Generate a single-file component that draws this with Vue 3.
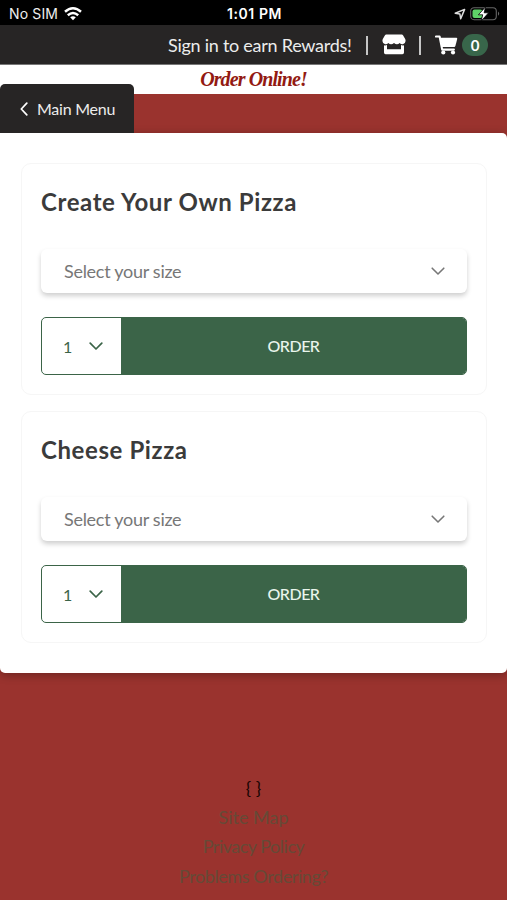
<script setup>
const items = ['Create Your Own Pizza', 'Cheese Pizza']
const links = ['Site Map', 'Privacy Policy', 'Problems Ordering?']
</script>

<template>
  <div class="page">
    <div class="status">
      <div class="carrier">
        <span>No SIM</span>
        <svg width="18" height="14" viewBox="0 0 18 14">
          <g fill="none" stroke="#fff" stroke-width="2.5">
            <path d="M1 4.8Q9-2.2 17 4.8" />
            <path d="M3.8 8.2Q9 3.7 14.2 8.2" />
          </g>
          <path d="M6.2 10.3Q9 8 11.8 10.3L9 13.3Z" fill="#fff" />
        </svg>
      </div>
      <span class="clock">1:01 PM</span>
      <div class="power">
        <svg width="12" height="12" viewBox="0 0 12 12">
          <path d="M10.6 1.4L1.2 5.3L5.9 6.1L6.7 10.8Z" fill="none" stroke="#ddd" stroke-width="1.5" stroke-linejoin="round" />
        </svg>
        <svg width="30" height="16" viewBox="0 0 30 16">
          <rect x=".7" y="1.7" width="25.6" height="12" rx="3.4" fill="none" stroke="#666" stroke-width="1.1" />
          <path d="M28 5.6Q30.4 7.7 28 9.8Z" fill="#666" />
          <rect x="2.5" y="3.5" width="10" height="8.6" rx="2" fill="#5fd468" />
          <path d="M15.6.8L8.4 8.8H12.7L11.2 15L18.6 6.8H14.1Z" fill="#fff" stroke="#000" stroke-width=".8" />
        </svg>
      </div>
    </div>

    <header class="topbar">
      <a class="signin">Sign in to earn Rewards!</a>
      <i class="bar"></i>
      <svg class="store" width="24" height="21" viewBox="0 0 24 21">
        <path d="M4.2.5H19.8Q20.6.5 21 1.2L23.2 5Q24.6 9.4 20.8 10.2Q19 10.5 17.7 9Q15 11.4 12 9Q9 11.4 6.3 9Q5 10.5 3.2 10.2Q-.6 9.4.8 5L3 1.2Q3.4.5 4.2.5Z" fill="#fff" />
        <path d="M2 11.2Q3.6 11.7 5 11V15.2H19V11Q20.4 11.7 22 11.2V18.6Q22 20.2 20.4 20.2H3.6Q2 20.2 2 18.6Z" fill="#fff" />
      </svg>
      <i class="bar second"></i>
      <svg class="cart" width="23" height="20" viewBox="0 0 23 20">
        <path d="M1 1.5H4.6L7.2 14.6H18.9" fill="none" stroke="#fff" stroke-width="2.1" stroke-linejoin="round" stroke-linecap="round" />
        <path d="M5.2 2.7H21.3Q22.5 2.7 22.2 3.9L20.4 11Q20.1 11.9 19.2 11.9H7Z" fill="#fff" />
        <circle cx="8.3" cy="17.5" r="2.1" fill="#fff" />
        <circle cx="18" cy="17.5" r="2.1" fill="#fff" />
      </svg>
      <span class="count">0</span>
    </header>

    <div class="banner">Order Online!</div>

    <a class="tab">
      <svg width="8" height="14" viewBox="0 0 8 14">
        <path d="M6.8 1.2L1.3 7L6.8 12.8" fill="none" stroke="#fff" stroke-width="1.7" stroke-linecap="round" stroke-linejoin="round" />
      </svg>
      <span>Main Menu</span>
    </a>

    <main class="panel">
      <section v-for="item in items" :key="item" class="card">
        <h2>{{ item }}</h2>
        <div class="size">
          <span>Select your size</span>
          <svg width="14" height="9" viewBox="0 0 14 9">
            <path d="M1.2 1.2L7 7L12.8 1.2" fill="none" stroke="#777" stroke-width="1.6" stroke-linecap="round" stroke-linejoin="round" />
          </svg>
        </div>
        <div class="buy">
          <div class="qty">
            <span>1</span>
            <svg width="14" height="9" viewBox="0 0 14 9">
              <path d="M1.2 1.2L7 7L12.8 1.2" fill="none" stroke="#3b6448" stroke-width="1.7" stroke-linecap="round" stroke-linejoin="round" />
            </svg>
          </div>
          <div class="order"><span>ORDER</span></div>
        </div>
      </section>
    </main>

    <footer class="footer">
      <div class="braces">{ }</div>
      <a v-for="(link, i) in links" :key="link" :class="'link' + i">{{ link }}</a>
    </footer>
  </div>
</template>

<style>
body { background: #9a332e; overflow: hidden; }
</style>

<style scoped>
.page {
  box-sizing: border-box;
  width: 507px;
  height: 900px;
  overflow: hidden;
  background: #9a332e;
  font-family: Lato, sans-serif;
}
svg { display: block; flex: none; }
.status {
  display: grid;
  grid-template-columns: 1fr auto 1fr;
  align-items: center;
  height: 25px;
  padding: 2px 7px 0 9px;
  box-sizing: border-box;
  background: #000;
  color: #eee;
  font: 400 14px/23px Inter, sans-serif;
}
.carrier { display: flex; align-items: center; gap: 6px; letter-spacing: .15px; }
.clock { font-weight: 600; color: #fff; letter-spacing: .6px; }
.power { display: flex; align-items: center; justify-content: flex-end; gap: 4px; }
.topbar {
  display: flex;
  align-items: center;
  height: 40px;
  box-sizing: border-box;
  padding: 0 19px 0 168px;
  background: #272525;
  border-bottom: 1px solid #777;
  color: #ececec;
}
.signin { width: 184px; margin-right: 14px; font-size: 18px; letter-spacing: -.26px; white-space: nowrap; }
.bar { width: 2px; height: 19px; background: #c6c6c6; margin-top: 2px; }
.store { margin-left: 14px; }
.bar.second { margin-left: 13px; }
.cart { margin-left: 14px; }
.count {
  margin-left: auto;
  width: 26px;
  height: 22px;
  border-radius: 11px;
  background: #38664a;
  color: #fff;
  font-size: 15px;
  font-weight: 700;
  line-height: 22px;
  text-align: center;
}
.banner {
  height: 29px;
  background: #fff;
  color: #931a12;
  font: italic 700 20px/29px "Liberation Serif", serif;
  letter-spacing: -.9px;
  text-align: center;
}
.tab {
  position: relative;
  display: flex;
  align-items: center;
  gap: 9px;
  width: 134px;
  height: 49px;
  box-sizing: border-box;
  margin-top: -10px;
  padding-left: 20px;
  border-radius: 5px 5px 0 0;
  background: #272525;
  color: #ececec;
  font-size: 16px;
  letter-spacing: -.25px;
}
.panel {
  display: flex;
  flex-direction: column;
  gap: 16px;
  height: 540px;
  box-sizing: border-box;
  padding: 30px 20px 0 21px;
  border-radius: 0 5px 5px 5px;
  background: #fff;
  box-shadow: 0 2px 10px rgba(0, 0, 0, .3);
}
.card {
  height: 232px;
  box-sizing: border-box;
  padding: 22px 19px 0;
  border: 1px solid #f6f6f6;
  border-radius: 10px;
}
h2 { margin: 0; font-size: 24px; line-height: 32px; letter-spacing: .6px; color: #3b3b3b; white-space: nowrap; }
.size {
  display: flex;
  align-items: center;
  justify-content: space-between;
  height: 44px;
  box-sizing: border-box;
  margin-top: 31px;
  padding: 0 22px 0 23px;
  border-radius: 6px;
  box-shadow: 0 3px 5px rgba(0, 0, 0, .19);
  color: #777;
  font-size: 18px;
  letter-spacing: -.28px;
}
.size span { padding-bottom: 1px; }
.buy {
  display: flex;
  height: 58px;
  box-sizing: border-box;
  margin-top: 24px;
  border: 1px solid #3b6448;
  border-radius: 5px;
  overflow: hidden;
}
.qty { display: flex; align-items: center; width: 79px; box-sizing: border-box; padding-left: 21px; gap: 17px; color: #3b6448; font-size: 16px; }
.order { flex: 1; display: flex; align-items: center; justify-content: center; background: #3b6448; color: #e9f5ec; font-size: 16px; font-weight: 500; letter-spacing: -.5px; }
.order span { padding-bottom: 2px; }
.footer { display: flex; flex-direction: column; align-items: center; padding-top: 101px; font-size: 18px; line-height: 29.2px; color: #664a37; }
.link1 { letter-spacing: -.5px; }
.link2 { letter-spacing: -.4px; }
.braces { color: #180504; }
</style>
